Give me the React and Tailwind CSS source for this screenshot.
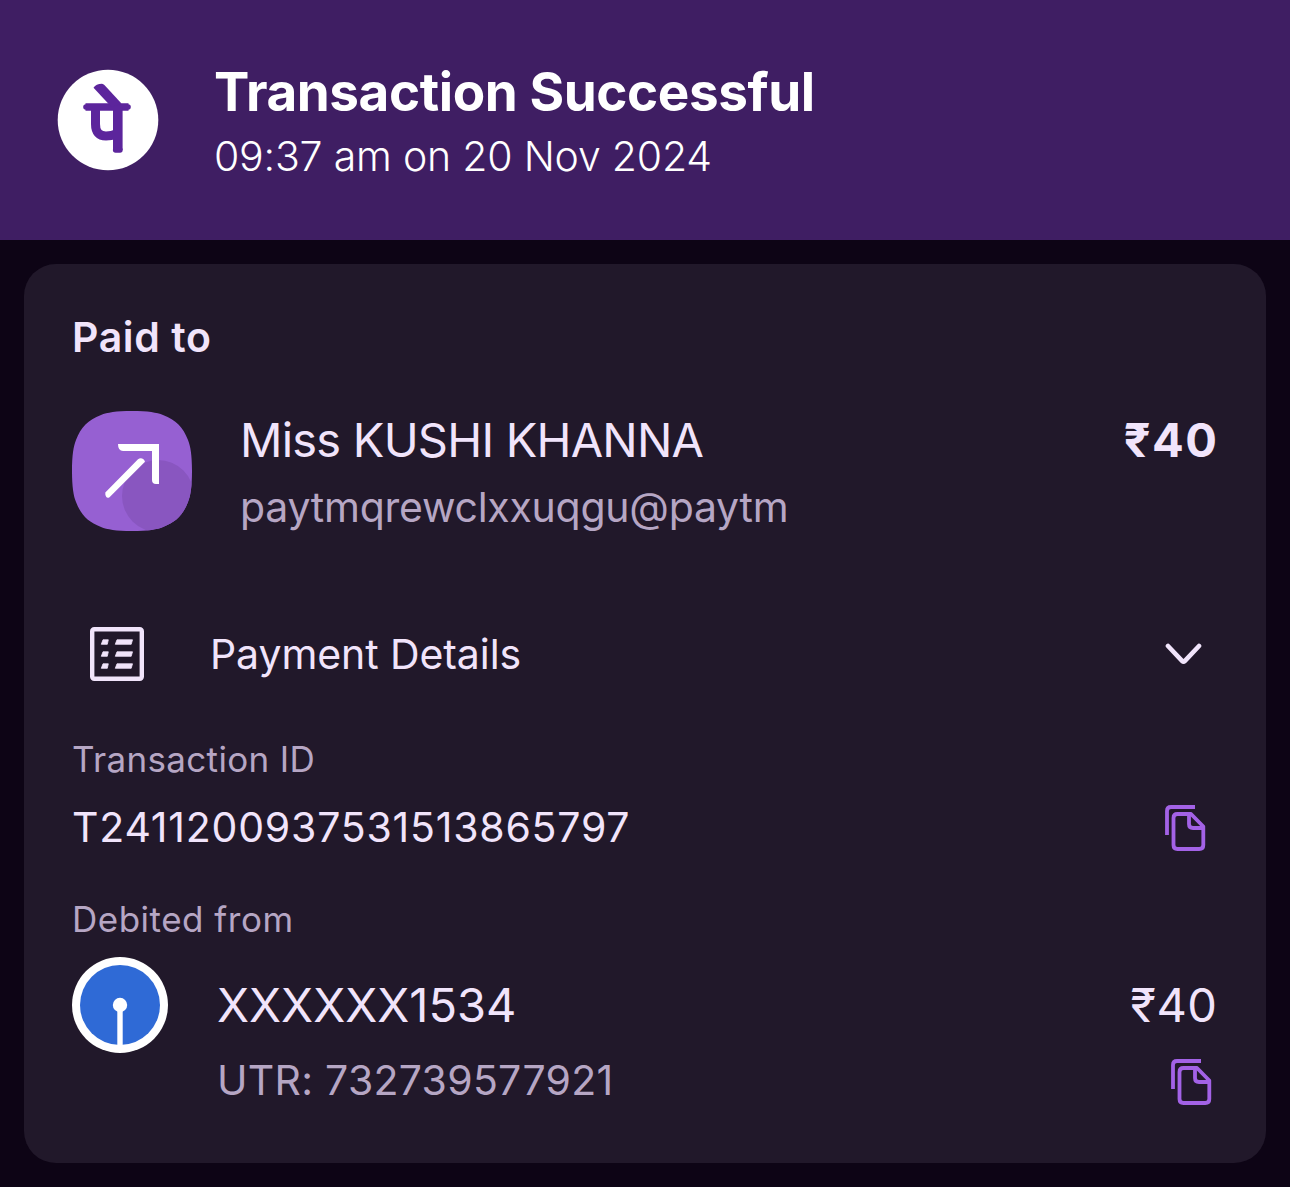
const T = ({ children, className }) => (
  <span className={"block whitespace-nowrap " + className}>{children}</span>
);

function PhonePeLogo() {
  return (
    <svg width="102" height="102" viewBox="57 69 102 102" fill="none" stroke="#5c259c" className="shrink-0">
      <circle cx="108" cy="120" r="50.3" fill="#fff" stroke="none" />
      <path d="M85.5 107H128.5" strokeWidth="7.6" />
      <path d="M86 107H128" strokeWidth="5.6" strokeLinecap="round" />
      <path d="M93.5 87.8Q96 84 102 83.8Q103.4 84 104.4 85L121.5 103.5L111.5 107Z" fill="#5c259c" stroke="none" />
      <path d="M95.5 107V124Q95.5 136 106 136Q112 136 117 133.5" strokeWidth="9" />
      <path d="M117.8 107V150" strokeWidth="9.6" />
      <path d="M115.6 150H120" strokeWidth="5.4" strokeLinecap="round" />
    </svg>
  );
}

function TransferIcon() {
  return (
    <svg width="120" height="120" viewBox="72 411 120 120" fill="none" className="shrink-0">
      <defs>
        <clipPath id="tile">
          <path d="M132 411C148 411 157 412.5 163 415C176 420 183 427 188 440C190.5 446 192 455 192 471C192 487 190.5 496 188 502C183 515 176 522 163 527C157 529.5 148 531 132 531C116 531 107 529.5 101 527C88 522 81 515 76 502C73.5 496 72 487 72 471C72 455 73.5 446 76 440C81 427 88 420 101 415C107 412.5 116 411 132 411Z" />
        </clipPath>
      </defs>
      <g clipPath="url(#tile)">
        <rect x="72" y="411" width="120" height="120" fill="#9660d2" />
        <circle cx="158" cy="496" r="36" fill="#8956c0" />
      </g>
      <path d="M118 444H159V484H156Q152 484 152 480V451H123Q118 451 118 444Z" fill="#fff" />
      <path d="M105.3 492.5L138 459.3Q140 457.6 142.2 458.5Q144.5 459.5 145 461.8L109.5 497.2Q107.5 498.5 106.3 497Q105 495.5 105.3 492.5Z" fill="#fff" />
    </svg>
  );
}

function DetailsIcon() {
  return (
    <svg width="54" height="54" viewBox="90 627 54 54" fill="none" stroke="#f1e4fb" className="shrink-0">
      <rect x="92.2" y="629.2" width="49.6" height="49.6" rx="2" strokeWidth="4.4" />
      <g fill="#f1e4fb" strokeWidth="0.8" strokeLinejoin="round">
        <path d="M103 639.8H108.3L107.3 644.3H101.3Z" />
        <path d="M103 651.8H108.3L107.3 656.3H101.3Z" />
        <path d="M103 663.8H108.3L107.3 668.3H101.3Z" />
        <path d="M117 639.8H132.5L131.2 644.3H115.3Z" />
        <path d="M117 651.8H132.5L131.2 656.3H115.3Z" />
        <path d="M117 663.8H132.5L131.2 668.3H115.3Z" />
      </g>
    </svg>
  );
}

function ChevronIcon() {
  return (
    <svg width="38" height="24" viewBox="1165 642 38 24" fill="none" stroke="#f1e4fb" strokeWidth="4.6" className="shrink-0">
      <path d="M1168 646L1182.3 661.2Q1183.5 662.4 1184.7 661.2L1199 646" strokeLinecap="round" strokeLinejoin="round" />
    </svg>
  );
}

function BankIcon() {
  return (
    <svg width="96" height="96" viewBox="72 957 96 96" className="shrink-0">
      <circle cx="120" cy="1005" r="48" fill="#fff" />
      <circle cx="120" cy="1005" r="40" fill="#2f6ad6" />
      <circle cx="120" cy="1005" r="7.2" fill="#fff" />
      <path d="M120 1006V1048" stroke="#fff" strokeWidth="5.4" />
    </svg>
  );
}

function CopyIcon() {
  return (
    <svg width="44" height="50" viewBox="1163 803 44 50" fill="none" stroke="#a362e6" strokeWidth="3.8" strokeLinejoin="round" className="shrink-0">
      <path d="M1167 835V811Q1167 807 1171 807H1195" />
      <path d="M1177.5 814H1191L1203.3 826.5V845Q1203.3 849 1199.3 849H1177.5Q1173.5 849 1173.5 845V818Q1173.5 814 1177.5 814Z" />
      <path d="M1189 814V824Q1189 828 1193 828H1203" />
    </svg>
  );
}

export default function App() {
  return (
    <main className="h-[1187px] w-[1290px] overflow-hidden bg-[#0d0415] font-['Inter',sans-serif] text-[#f1e4fb]">
      <header className="flex h-[240px] items-start bg-[#3f1e63] pl-[57px] pt-[69px] text-white">
        <PhonePeLogo />
        <div className="-mt-[9px] ml-[55px] flex flex-col">
          <T className="text-[53px] font-bold leading-[64px] tracking-[-0.42px]">Transaction Successful</T>
          <T className="text-[41px] font-light leading-[65px] tracking-[-0.2px]">09:37 am on 20 Nov 2024</T>
        </div>
      </header>
      <section className="mx-6 mt-6 h-[899px] rounded-[32px] bg-[#21182a] pl-12 pr-[49px] pt-12">
        <T className="text-[41px] font-semibold leading-[50px] tracking-[0.6px]">Paid to</T>
        <div className="mt-[49px] flex h-[120px] items-start">
          <TransferIcon />
          <div className="ml-12 flex-1">
            <T className="text-[47px] leading-[58px] tracking-[-0.77px]">Miss KUSHI KHANNA</T>
            <T className="mt-2 text-[41px] leading-[60px] tracking-[-0.25px] text-[#b6a6c4]">paytmqrewclxxuqgu@paytm</T>
          </div>
          <T className="-mr-[1.5px] text-[47px] font-bold leading-[58px] tracking-[1.5px]">₹40</T>
        </div>
        <div className="mt-24 flex h-[54px] items-center pl-[18px] pr-[14px]">
          <DetailsIcon />
          <T className="ml-[66px] flex-1 text-[41px] leading-[54px] tracking-[-0.08px]">Payment Details</T>
          <ChevronIcon />
        </div>
        <T className="mt-14 text-[35px] leading-[44px] tracking-[0.34px] text-[#b6a6c4]">Transaction ID</T>
        <div className="mt-[22px] flex h-[50px] items-center justify-between pr-[10px]">
          <T className="-mt-[2px] text-[41px] leading-[50px] tracking-[0.78px]">T2411200937531513865797</T>
          <CopyIcon />
        </div>
        <T className="mt-11 text-[35px] leading-[44px] tracking-[0.5px] text-[#b6a6c4]">Debited from</T>
        <div className="mt-4 flex items-start">
          <BankIcon />
          <div className="ml-[49px] flex-1">
            <div className="flex h-24 items-center justify-between">
              <T className="text-[47px] leading-[60px]">XXXXXX1534</T>
              <T className="-mr-[0.5px] text-[47px] leading-[60px] tracking-[0.5px]">₹40</T>
            </div>
            <div className="mt-1 flex h-[50px] items-center justify-between pr-1">
              <T className="-mt-1 text-[41px] leading-[50px] tracking-[0.28px] text-[#b6a6c4]">UTR: 732739577921</T>
              <CopyIcon />
            </div>
          </div>
        </div>
      </section>
    </main>
  );
}
